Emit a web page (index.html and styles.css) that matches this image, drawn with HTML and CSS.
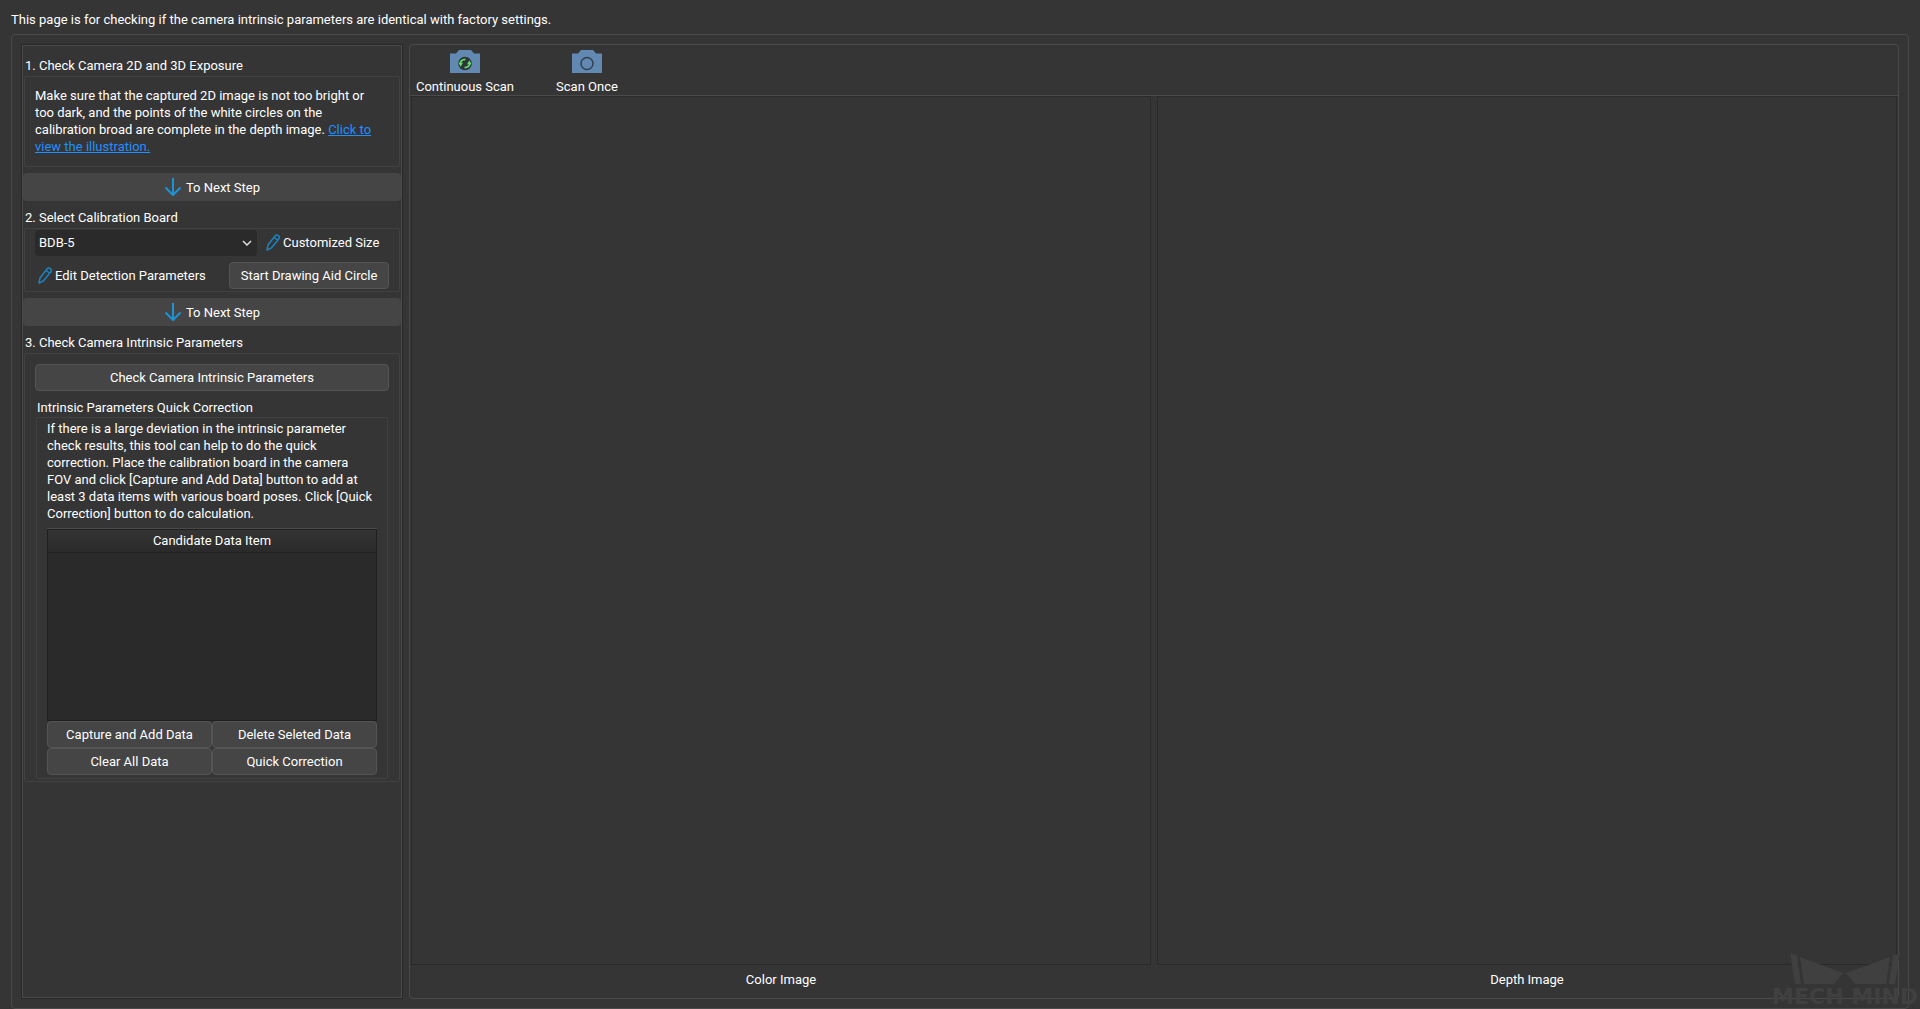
FILE: index.html
```html
<!DOCTYPE html>
<html lang="en">
<head>
<meta charset="utf-8">
<title>Camera Intrinsic Parameters Check</title>
<link rel="stylesheet" href="styles.css">
</head>
<body>
<svg class="defs" aria-hidden="true">
  <symbol id="arrow" viewBox="0 0 18 18"><path d="M9 0v17M1.500 9.500L9 17l7.500-7.500" fill="none" stroke="#1c93d6" stroke-width="2"/></symbol>
  <symbol id="pencil" viewBox="0 0 14 17"><path d="M1 16l1-5L9 2Q10.500 .3 12.300 1.600T12.700 5L5.500 13.800ZM8 3.300l3.700 3" fill="none" stroke="#1c86c4" stroke-width="1.400" stroke-linejoin="round"/></symbol>
  <symbol id="camera" viewBox="0 0 30 23"><path d="M0 3.500h6L9 0h12l3 3.500h6V23H0Z" fill="#6189b2"/></symbol>
</svg>
<p class="intro">This page is for checking if the camera intrinsic parameters are identical with factory settings.</p>
<main class="frame">
  <aside class="steps">
    <section>
      <h2 class="title">1. Check Camera 2D and 3D Exposure</h2>
      <div class="group note">
        <p class="text">Make sure that the captured 2D image is not too bright or too dark, and the points of the white circles on the calibration broad are complete in the depth image. <a href="#illustration">Click to view the illustration.</a></p>
      </div>
    </section>
    <button class="next" type="button"><svg class="arrow"><use href="#arrow"/></svg>To Next Step</button>
    <section>
      <h2 class="title">2. Select Calibration Board</h2>
      <div class="group board">
        <div class="row">
          <div class="combo">
            <select class="select" aria-label="Calibration board"><option>BDB-5</option></select>
            <svg class="chevron" viewBox="0 0 10 6"><path d="M1 1l4 4 4-4" fill="none" stroke="#ddd" stroke-width="1.500"/></svg>
          </div>
          <button class="flat" type="button"><svg class="pencil"><use href="#pencil"/></svg>Customized Size</button>
        </div>
        <div class="row">
          <button class="flat" type="button"><svg class="pencil"><use href="#pencil"/></svg>Edit Detection Parameters</button>
          <button class="btn aid" type="button">Start Drawing Aid Circle</button>
        </div>
      </div>
    </section>
    <button class="next" type="button"><svg class="arrow"><use href="#arrow"/></svg>To Next Step</button>
    <section>
      <h2 class="title">3. Check Camera Intrinsic Parameters</h2>
      <div class="group check">
        <button class="btn" type="button">Check Camera Intrinsic Parameters</button>
        <h3 class="title subtitle">Intrinsic Parameters Quick Correction</h3>
        <div class="group correction">
          <p class="text">If there is a large deviation in the intrinsic parameter check results, this tool can help to do the quick correction. Place the calibration board in the camera FOV and click [Capture and Add Data] button to add at least 3 data items with various board poses. Click [Quick Correction] button to do calculation.</p>
          <div class="list">
            <table class="table"><thead><tr><th>Candidate Data Item</th></tr></thead><tbody></tbody></table>
          </div>
          <div class="actions">
            <button class="btn" type="button">Capture and Add Data</button>
            <button class="btn" type="button">Delete Seleted Data</button>
            <button class="btn" type="button">Clear All Data</button>
            <button class="btn" type="button">Quick Correction</button>
          </div>
        </div>
      </div>
    </section>
  </aside>
  <section class="viewer">
    <div class="toolbar">
      <button class="tool" type="button">
        <svg class="camera" viewBox="0 0 30 23"><use href="#camera"/><circle cx="15" cy="13.500" r="6.800" fill="#2d3336"/><path d="M10 14Q10.500 9.500 15.500 9.300M20 13Q19.500 17.500 14.500 17.700" fill="none" stroke="#63dd6b" stroke-width="1.800"/><path d="M8.500 13l4.500-.5-2.300 4.300ZM21.500 14l-4.500.5 2.300-4.300Z" fill="#63dd6b"/></svg>
        Continuous Scan
      </button>
      <button class="tool" type="button">
        <svg class="camera" viewBox="0 0 30 23"><use href="#camera"/><circle cx="15" cy="13.500" r="6" fill="none" stroke="#33414f" stroke-width="1.500"/></svg>
        Scan Once
      </button>
    </div>
    <div class="views">
      <figure class="view"><div class="canvas"></div><figcaption>Color Image</figcaption></figure>
      <figure class="view"><div class="canvas"></div><figcaption>Depth Image</figcaption></figure>
    </div>
  </section>
</main>
<div class="brand">
  <svg class="mark" viewBox="0 0 110 32"><path d="M0 0l7 2.500L11 31H5ZM10 4l43 16-9 11H14ZM110 0l-7 2.500L99 31h6ZM100 4L56 20l9 11h31Z" fill="currentColor"/></svg>
  <span>MECH MIND</span>
</div>
</body>
</html>
```
FILE: styles.css
```css
* { box-sizing: border-box; }
body {
  margin: 0;
  height: 100vh;
  display: flex;
  flex-direction: column;
  position: relative;
  overflow: hidden;
  background: #353535;
  color: #fff;
  font: 13px/17px Roboto, sans-serif;
}
p, h2, h3, figure { margin: 0; }
.defs { position: absolute; width: 0; height: 0; }
.intro { padding: 11px 11px 6px; }
.frame {
  flex: 1;
  min-height: 0;
  display: grid;
  grid-template-columns: 382px 1fr;
  gap: 6px;
  margin: 0 11px 0;
  padding: 9px;
  border: 1px solid #4a4a4a;
  border-radius: 4px;
}
.steps {
  padding: 1px;
  border: 1px solid #282828;
  box-shadow: inset 0 0 0 1px #4a4a4a;
}
.title { font-size: 13px; font-weight: 400; line-height: 17px; padding: 11px 2px 2px; }
.group { margin: 0 1px; border: 1px solid #414141; border-radius: 2px; padding: 10px; }
.note { height: 91px; padding-right: 19px; }
a { color: #1e90ff; }
button, select { font: inherit; color: inherit; }
.btn {
  height: 27px;
  padding: 0 8px;
  background: #454545;
  border: 1px solid #555;
  border-radius: 4px;
}
.next {
  display: flex;
  align-items: center;
  justify-content: center;
  gap: 4px;
  width: 100%;
  height: 28px;
  margin-top: 6px;
  padding: 0;
  border: 0;
  border-radius: 4px;
  background: #454545;
}
.next + section .title { padding-top: 8px; }
.arrow { width: 18px; height: 18px; }
.board { padding: 0 10px; height: 64px; display: grid; gap: 6px; align-content: start; }
.row { display: flex; align-items: center; height: 27px; }
.combo { position: relative; width: 222px; }
.select {
  display: block;
  appearance: none;
  width: 100%;
  height: 26px;
  padding: 0 4px;
  border: 0;
  border-radius: 4px;
  background: #2a2a2a;
}
.chevron { position: absolute; right: 5px; top: 10px; width: 10px; height: 6px; }
.flat {
  display: flex;
  align-items: center;
  gap: 3px;
  padding: 0;
  border: 0;
  background: none;
  white-space: nowrap;
  margin-left: 3px;
}
.combo + .flat { margin-left: 9px; }
.pencil { width: 14px; height: 17px; }
.aid { margin-left: auto; width: 160px; white-space: nowrap; }
.check { padding: 10px 10px 2px; }
.check > .btn { width: 100%; }
.next + section .subtitle { padding: 8px 2px 1px; }
.correction { padding: 2px 10px 3px; }
.correction .text { padding-right: 3px; }
.list { height: 192px; margin-top: 7px; border: 1px solid #1f1f1f; background: #2a2a2a; box-shadow: 0 -1px #4a4a4a; }
.table { width: 100%; border-collapse: collapse; }
th {
  height: 22px;
  padding: 0;
  font-weight: 400;
  background: linear-gradient(#343434, #2a2a2a);
  border-bottom: 1px solid #222;
}
.actions { display: grid; grid-template-columns: 1fr 1fr; }
.viewer {
  display: flex;
  flex-direction: column;
  border: 1px solid #4a4a4a;
  border-radius: 4px;
}
.toolbar { display: flex; height: 51px; border-bottom: 1px solid #4a4a4a; }
.tool {
  display: flex;
  flex-direction: column;
  align-items: center;
  gap: 5px;
  width: 122px;
  padding: 5px 0 0;
  border: 0;
  background: none;
}
.tool:first-child { width: 110px; margin-right: 6px; }
.camera { width: 30px; height: 23px; }
.views { flex: 1; display: grid; grid-template-columns: 1fr 1fr; gap: 6px; padding: 0 1px; }
.view { display: flex; flex-direction: column; }
.canvas { flex: 1; border: 1px solid #2a2a2a; }
figcaption { height: 33px; padding-top: 6px; text-align: center; }
.brand {
  position: absolute;
  right: 2px;
  bottom: 0;
  display: flex;
  flex-direction: column;
  align-items: center;
  color: #404040;
  font: bold 22px/24px "DejaVu Sans", sans-serif;
  pointer-events: none;
}
.mark { width: 110px; height: 32px; }
```
